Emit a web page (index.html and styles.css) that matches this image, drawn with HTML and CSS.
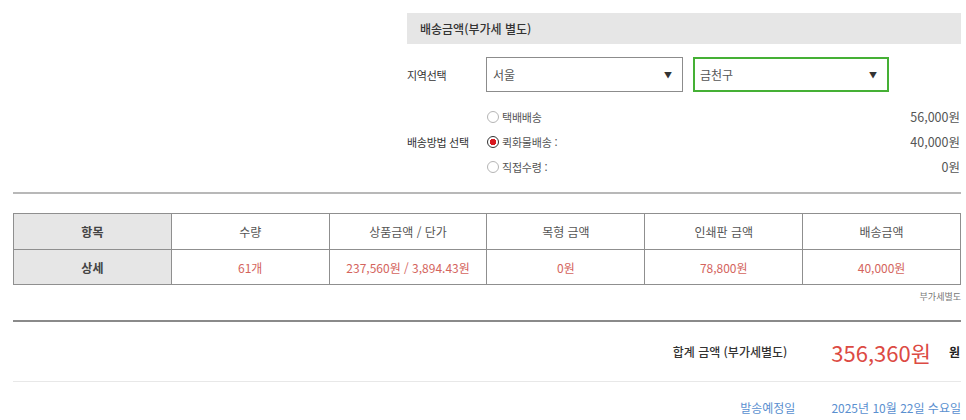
FILE: index.html
```html
<!DOCTYPE html>
<html lang="ko">
<head>
    <meta charset="UTF-8">
    <meta name="viewport" content="width=device-width, initial-scale=1.0">
    <title>견적 요약</title>
    <link rel="stylesheet" href="styles.css">
</head>
<body>

<div class="page">
    <section class="delivery">
        <div class="delivery-head">배송금액(부가세 별도)</div>

        <div class="delivery-row region">
            <div class="row-label">지역선택</div>
            <div class="select-box">
                <span>서울</span>
                <span class="arrow">▼</span>
            </div>
            <div class="select-box active">
                <span>금천구</span>
                <span class="arrow">▼</span>
            </div>
        </div>

        <div class="delivery-row method">
            <div class="row-label">배송방법 선택</div>
            <div class="options">
                <div class="option">
                    <span class="radio"></span>
                    <span class="option-name">택배배송</span>
                    <span class="option-price">56,000원</span>
                </div>
                <div class="option">
                    <span class="radio checked"></span>
                    <span class="option-name">퀵화물배송 :</span>
                    <span class="option-price">40,000원</span>
                </div>
                <div class="option">
                    <span class="radio"></span>
                    <span class="option-name">직접수령 :</span>
                    <span class="option-price">0원</span>
                </div>
            </div>
        </div>
    </section>

    <hr class="line-mid">

    <table class="summary">
        <tr>
            <th>항목</th>
            <td class="head">수량</td>
            <td class="head">상품금액 / 단가</td>
            <td class="head">목형 금액</td>
            <td class="head">인쇄판 금액</td>
            <td class="head">배송금액</td>
        </tr>
        <tr>
            <th>상세</th>
            <td class="val">61개</td>
            <td class="val">237,560원 / 3,894.43원</td>
            <td class="val">0원</td>
            <td class="val">78,800원</td>
            <td class="val">40,000원</td>
        </tr>
    </table>
    <p class="vat-note">부가세별도</p>

    <hr class="line-dark">

    <div class="total-row">
        <span class="total-label">합계 금액 (부가세별도)</span>
        <span class="total-price">356,360원</span>
        <span class="total-unit">원</span>
    </div>

    <div class="date-row">
        <span>발송예정일</span>
        <span class="date-value">2025년 10월 22일 수요일</span>
    </div>
</div>

</body>
</html>
```

FILE: styles.css
```css
body {
    margin: 0;
    font-family: "Noto Sans CJK KR", "Noto Sans", sans-serif;
    color: #333;
    background: #fff;
}

.page {
    padding: 13px 5px 0 13px;
}

/* 배송 영역 */
.delivery {
    width: 554px;
    margin-left: auto;
}

.delivery-head {
    height: 31px;
    line-height: 31px;
    padding-left: 13px;
    background-color: #e6e6e6;
    font-size: 12px;
    font-weight: 500;
    color: #333;
}

.delivery-row {
    display: flex;
    align-items: center;
}

.region {
    margin-top: 13px;
    gap: 10px;
}

.row-label {
    width: 79px;
    font-size: 11px;
    color: #333;
    letter-spacing: -0.3px;
}

.region .row-label {
    margin-right: -10px;
}

.select-box {
    box-sizing: border-box;
    width: 197px;
    height: 35px;
    border: 1px solid #8c8c8c;
    display: flex;
    align-items: center;
    justify-content: space-between;
    padding: 0 10px 0 6px;
    font-size: 12px;
    color: #555;
}

.select-box.active {
    width: 196px;
    border: 2px solid #45b035;
    padding-left: 5px;
}

.arrow {
    font-size: 8px;
    color: #333;
}

.method {
    margin-top: 12px;
}

.options {
    flex: 1;
}

.option {
    display: flex;
    align-items: center;
    height: 25px;
    font-size: 11px;
    color: #555;
}

.radio {
    box-sizing: border-box;
    width: 12px;
    height: 12px;
    margin-left: 1px;
    margin-right: 3px;
    border: 1px solid #b5b5b5;
    border-radius: 50%;
    background: #fff;
}

.radio.checked {
    border: 1px solid #333;
    background: radial-gradient(circle, #d71920 0, #d71920 3px, #fff 3.5px);
}

.option-name {
    flex: 1;
    letter-spacing: -0.2px;
}

.option-price {
    font-size: 12.5px;
    color: #555;
    padding-right: 1px;
}

hr {
    border: none;
    margin: 0;
}

.line-mid {
    margin-top: 13px;
    height: 2px;
    background: #b8b8b8;
}

/* 요약 표 */
.summary {
    width: 100%;
    margin-top: 19px;
    border-collapse: collapse;
    table-layout: fixed;
}

.summary th,
.summary td {
    border: 1px solid #8f8f8f;
    text-align: center;
    font-size: 12px;
    font-weight: normal;
}

.summary tr:first-child th,
.summary tr:first-child td {
    height: 33px;
}

.summary tr:last-child th,
.summary tr:last-child td {
    height: 32px;
}

.summary th {
    background-color: #e6e6e6;
    font-weight: bold;
    color: #444;
}

.head {
    color: #555;
}

.val {
    color: #d4645d;
}

.vat-note {
    margin: 5px 0 0;
    text-align: right;
    font-size: 9px;
    color: #777;
    line-height: 14px;
}

.line-dark {
    margin-top: 16px;
    height: 2px;
    background: #8a8a8a;
}

.total-row {
    height: 59px;
    display: flex;
    align-items: center;
    justify-content: flex-end;
    border-bottom: 1px solid #e8e8e8;
}

.total-label {
    font-size: 12px;
    font-weight: 500;
    color: #333;
    margin-right: 44px;
}

.total-price {
    font-size: 22px;
    color: #dc4a43;
    margin-right: 18px;
}

.total-unit {
    font-size: 12px;
    font-weight: bold;
    color: #222;
    padding-right: 1px;
}

.date-row {
    height: 50px;
    display: flex;
    align-items: center;
    justify-content: flex-end;
    gap: 36px;
    font-size: 12px;
    color: #5a90d0;
}
```
